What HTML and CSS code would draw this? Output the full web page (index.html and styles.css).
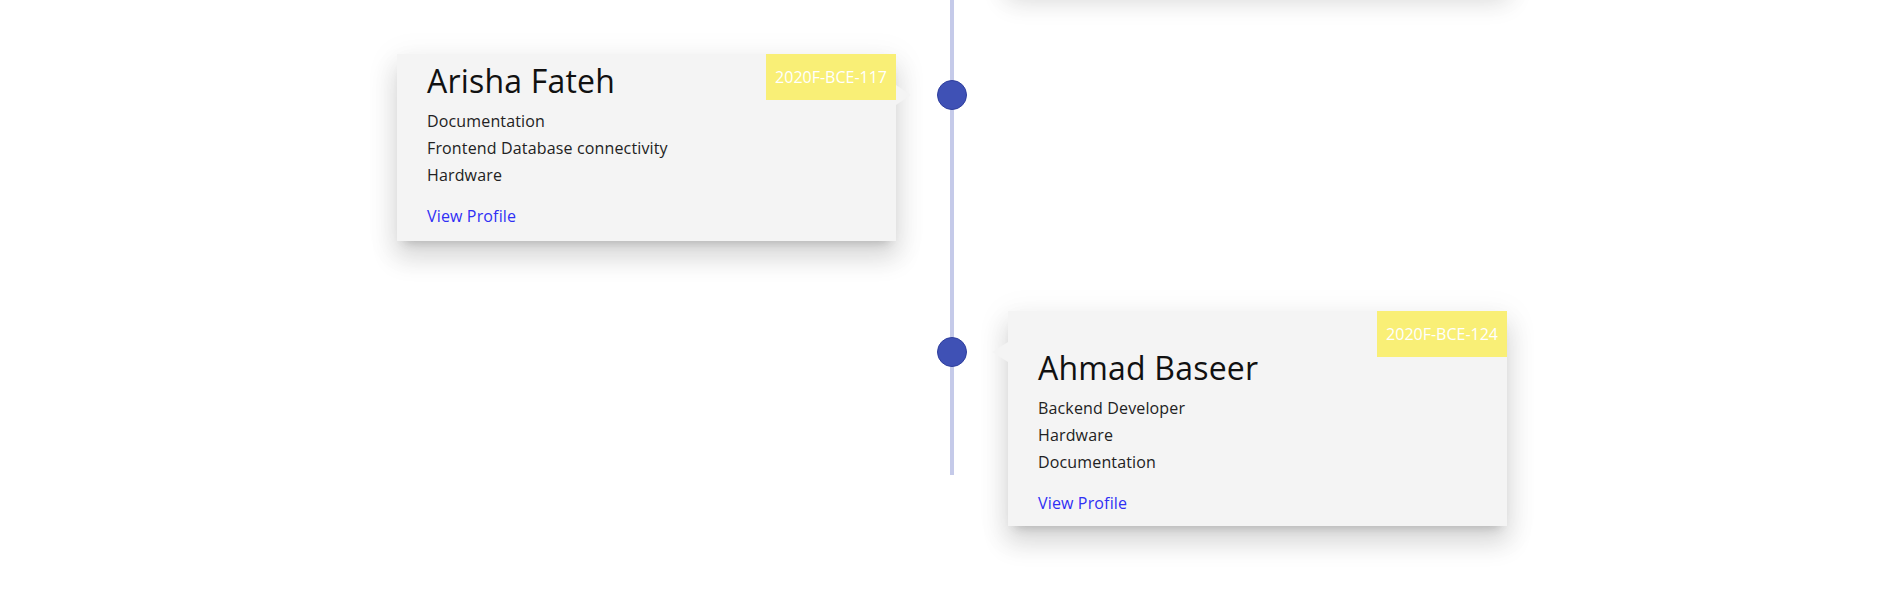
FILE: index.html
```html
<!DOCTYPE html>
<html lang="en">
<head>
<meta charset="utf-8">
<title>Team Timeline</title>
<link rel="stylesheet" href="styles.css">
</head>
<body>
<section class="timeline">
  <div class="item">
    <div class="dot"></div>
    <div class="card card-right card-stub" aria-hidden="true"></div>
  </div>
  <div class="item">
    <div class="dot"></div>
    <div class="card card-left">
      <span class="badge badge-corner">2020F-BCE-117</span>
      <h2 class="name">Arisha Fateh</h2>
      <ul class="roles">
        <li>Documentation</li>
        <li>Frontend Database connectivity</li>
        <li>Hardware</li>
      </ul>
      <a class="link" href="#">View Profile</a>
    </div>
  </div>
  <div class="item">
    <div class="dot"></div>
    <div class="card card-right">
      <div class="badge-row"><span class="badge">2020F-BCE-124</span></div>
      <h2 class="name">Ahmad Baseer</h2>
      <ul class="roles">
        <li>Backend Developer</li>
        <li>Hardware</li>
        <li>Documentation</li>
      </ul>
      <a class="link" href="#">View Profile</a>
    </div>
  </div>
</section>
</body>
</html>
```
FILE: styles.css
```css
* { box-sizing: border-box; }

html {
  overflow: hidden;
  background: #ffffff;
}

body {
  margin: 0;
  padding: 0 0 68px;
  background: #ffffff;
  font-family: "Open Sans", "Noto Sans", sans-serif;
  color: #222;
}

.timeline {
  position: relative;
  width: 1110px;
  margin: -232px auto 0;
  display: flex;
  flex-direction: column;
  gap: 70px;
}

.timeline::before {
  content: "";
  position: absolute;
  left: 553px;
  width: 4px;
  top: 0;
  bottom: 51px;
  background: #c5cae9;
}

.item {
  position: relative;
  display: grid;
  grid-template-columns: 499px 499px;
  column-gap: 112px;
}

.dot {
  position: absolute;
  left: 540px;
  top: 26px;
  width: 30px;
  height: 30px;
  border-radius: 50%;
  background: #3f51b5;
  border: 1px solid #2f3f9e;
  z-index: 2;
}

.card {
  position: relative;
  background: #f4f4f4;
  box-shadow: 0 16px 24px 2px rgba(0, 0, 0, 0.12),
              0 6px 30px 5px rgba(0, 0, 0, 0.05),
              0 8px 10px -7px rgba(0, 0, 0, 0.2);
}

.card-stub {
  height: 216px;
}

.card-left {
  grid-column: 1;
  padding: 9px 30px 11px;
}

.card-right {
  grid-column: 2;
  padding: 0 30px 9px;
}

.card-left::after,
.card-right::after {
  content: "";
  position: absolute;
  top: 31px;
  width: 0;
  height: 0;
  border-top: 10px solid transparent;
  border-bottom: 10px solid transparent;
}

.card-left::after {
  right: -15px;
  border-left: 15px solid #f4f4f4;
}

.card-right::after {
  left: -16px;
  border-right: 16px solid #f4f4f4;
}

.badge {
  display: inline-block;
  height: 46px;
  line-height: 46px;
  padding: 0 9px;
  background: #f9ef76;
  color: #ffffff;
  font-size: 16px;
}

.badge-corner {
  position: absolute;
  top: 0;
  right: 0;
}

.badge-row {
  display: flex;
  justify-content: flex-end;
  margin-right: -30px;
}

.name {
  margin: 0;
  font-size: 32px;
  font-weight: 400;
  line-height: 36px;
  letter-spacing: 0.2px;
  color: #111;
}

.card-right .name {
  margin-top: -7px;
}

.roles {
  list-style: none;
  margin: 9px 0 0;
  padding: 0;
  font-size: 16px;
  line-height: 27px;
  letter-spacing: 0.15px;
  color: #222;
}

.link {
  display: block;
  margin-top: 14px;
  font-size: 16px;
  line-height: 27px;
  letter-spacing: 0.15px;
  color: #2f2ff5;
  text-decoration: none;
}
```
